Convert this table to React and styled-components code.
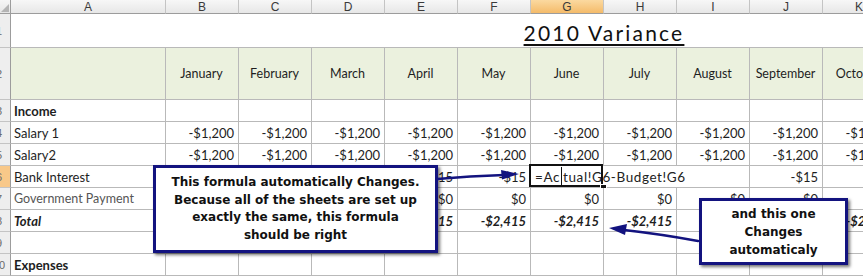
import React from 'react'
import styled, { createGlobalStyle } from 'styled-components'

const GlobalStyle = createGlobalStyle`
  html, body {
    margin: 0;
    padding: 0;
    background: #ffffff;
  }
`;

const GRID = '#b9b9b9';
const NAVY = '#13137f';
const HAND = '"Lato", "DejaVu Sans", sans-serif';

const Page = styled.div`
  position: relative;
  width: 863px;
  height: 279px;
  overflow: hidden;
  background: #ffffff;
`;

const Sheet = styled.div`
  display: grid;
  grid-template-columns: 11px 155px repeat(10, 73px);
  grid-template-rows: 14px 34px 52px repeat(9, 22px);
  width: 896px;
  font-family: ${HAND};
  color: #222;
`;

const Corner = styled.div`
  position: relative;
  background: linear-gradient(#f6f6f6, #e6e6e6);
  border-right: 1px solid #9c9c9c;
  border-bottom: 1px solid #9c9c9c;
  box-sizing: border-box;
  overflow: hidden;

  &::after {
    content: '';
    position: absolute;
    right: 1px;
    bottom: 1px;
    border-left: 8px solid transparent;
    border-bottom: 8px solid #b4b4b4;
  }
`;

const ColHead = styled.div`
  display: flex;
  align-items: center;
  justify-content: center;
  box-sizing: border-box;
  border-right: 1px solid #c4c4c4;
  border-bottom: 1px solid #9c9c9c;
  background: ${(p) => p.$active
    ? 'linear-gradient(#fbd9a0, #f4bb6a)'
    : 'linear-gradient(#f7f7f7, #e7e7e7)'};
  font-family: "Liberation Sans", Arial, sans-serif;
  font-size: 12px;
  color: #3a3a3a;
  line-height: 1;
`;

const RowHead = styled.div`
  display: flex;
  align-items: center;
  box-sizing: border-box;
  overflow: hidden;
  border-right: 1px solid #9c9c9c;
  border-bottom: 1px solid #c4c4c4;
  background: ${(p) => p.$active ? '#f8c889' : '#eeeeee'};
  font-family: "Liberation Sans", Arial, sans-serif;
  font-size: 11px;
  color: #6a6a6a;

  span {
    flex: none;
    width: 22px;
    margin-left: -12px;
    text-align: center;
  }
`;

const Cell = styled.div`
  display: flex;
  align-items: center;
  justify-content: ${(p) => p.$align === 'right' ? 'flex-end' : p.$align === 'center' ? 'center' : 'flex-start'};
  box-sizing: border-box;
  padding: 0 4px 0 3px;
  border-right: 1px solid ${GRID};
  border-bottom: 1px solid ${GRID};
  background: ${(p) => p.$fill || '#ffffff'};
  font-size: ${(p) => p.$size || 13}px;
  font-weight: ${(p) => p.$bold ? 700 : 400};
  font-style: ${(p) => p.$italic ? 'italic' : 'normal'};
  color: ${(p) => p.$muted ? '#555' : '#1e1e1e'};
  white-space: nowrap;
  overflow: ${(p) => p.$spill ? 'visible' : 'hidden'};
  position: relative;
  z-index: ${(p) => p.$spill ? 1 : 0};
`;

const TitleRow = styled.div`
  grid-column: 2 / -1;
  display: grid;
  grid-template-columns: 374px 438px 1fr;
  align-items: center;
  border-bottom: 1px solid ${GRID};
`;

const Title = styled.div`
  grid-column: 2;
  text-align: center;
  font-family: ${HAND};
  font-size: 21px;
  letter-spacing: 2.2px;
  text-decoration: underline;
  text-decoration-thickness: 1.5px;
  text-underline-offset: 3px;
  color: #111;
  padding-top: 4px;
`;

const FormulaCell = styled.div`
  grid-column: span 3;
  position: relative;
  display: flex;
  align-items: center;
  box-sizing: border-box;
  padding-left: 4px;
  border-right: 1px solid ${GRID};
  border-bottom: 1px solid ${GRID};
  font-size: 13.5px;
  letter-spacing: 0.6px;
  white-space: nowrap;
  background: #ffffff;

  &::before {
    content: '';
    position: absolute;
    left: -2px;
    top: -2px;
    width: 74px;
    height: 23px;
    border: 2px solid #111;
    box-sizing: border-box;
  }

  &::after {
    content: '';
    position: absolute;
    left: 69px;
    top: 18px;
    width: 5px;
    height: 5px;
    background: #111;
    border: 1px solid #fff;
  }
`;

const Caret = styled.span`
  display: inline-block;
  width: 1px;
  height: 20px;
  background: #111;
  margin: 0 1px;
  vertical-align: middle;
`;

const Callout = styled.div`
  position: absolute;
  left: ${(p) => p.$x}px;
  top: ${(p) => p.$y}px;
  width: ${(p) => p.$w}px;
  height: ${(p) => p.$h}px;
  box-sizing: border-box;
  padding-top: ${(p) => p.$pad}px;
  border: 3px solid ${NAVY};
  background: #ffffff;
  box-shadow: 2px 2px 3px rgba(0, 0, 0, 0.55);
  text-align: center;
  font-family: "DejaVu Sans", "Liberation Sans", sans-serif;
  font-weight: 700;
  font-size: 12px;
  line-height: ${(p) => p.$lh}px;
  color: #111;
  z-index: 3;
`;

const Arrows = styled.svg`
  position: absolute;
  left: 0;
  top: 0;
  z-index: 4;
  pointer-events: none;
`;

const months = ['January', 'February', 'March', 'April', 'May', 'June', 'July', 'August', 'September', 'October'];
const letters = ['B', 'C', 'D', 'E', 'F', 'G', 'H', 'I', 'J', 'K'];

// cells listed in `blank` sit fully under a note, so they stay empty
const fill = (v, blank = []) => letters.map((l) => (blank.includes(l) ? '' : v));

const rows = [
  { n: 3, label: 'Income', bold: true, values: fill('') },
  { n: 4, label: 'Salary 1', values: fill('-$1,200') },
  { n: 5, label: 'Salary2', values: fill('-$1,200') },
  { n: 6, label: 'Bank Interest', values: fill('-$15', ['B', 'C', 'D']), formula: true },
  { n: 7, label: 'Government Payment', muted: true, values: fill('$0', ['B', 'C', 'D']) },
  { n: 8, label: 'Total', bold: true, italic: true, values: fill('-$2,415', ['B', 'C', 'D', 'J']) },
  { n: 9, label: '', values: fill('') },
  { n: 10, label: 'Expenses', bold: true, values: fill('') },
];

const DataRow = ({ row }) => {
  const cells = [];
  row.values.forEach((v, i) => {
    if (row.formula && i === 5) {
      cells.push(
        <FormulaCell key={i}>
          =Ac<Caret />tual!G6-Budget!G6
        </FormulaCell>
      );
      return;
    }
    if (row.formula && (i === 6 || i === 7)) return;
    cells.push(
      <Cell key={i} $align="right" $bold={row.bold && row.italic} $italic={row.italic}>
        {v}
      </Cell>
    );
  });

  return (
    <>
      <RowHead $active={row.n === 6}><span>{row.n}</span></RowHead>
      <Cell
        $bold={row.bold}
        $italic={row.italic}
        $muted={row.muted}
        $size={row.muted ? 12.5 : 13}
        $spill={row.muted}
      >
        {row.label}
      </Cell>
      {cells}
    </>
  );
};

const App = () => {
  return (
    <Page>
      <GlobalStyle />
      <Sheet>
        <Corner />
        <ColHead>A</ColHead>
        {letters.map((l) => (
          <ColHead key={l} $active={l === 'G'}>{l}</ColHead>
        ))}

        <RowHead><span>1</span></RowHead>
        <TitleRow>
          <Title>2010 Variance</Title>
        </TitleRow>

        <RowHead><span>2</span></RowHead>
        <Cell $fill="#ebf1de" />
        {months.map((m) => (
          <Cell key={m} $fill="#ebf1de" $align="center" $size={12.5}>{m}</Cell>
        ))}

        {rows.map((r) => (
          <DataRow key={r.n} row={r} />
        ))}
      </Sheet>

      <Callout $x={153} $y={165} $w={285} $h={88} $pad={6} $lh={17.5}>
        This formula automatically Changes.<br />
        Because all of the sheets are set up<br />
        exactly the same, this formula<br />
        should be right
      </Callout>

      <Callout $x={699} $y={198} $w={149} $h={67} $pad={4} $lh={18}>
        and this one<br />
        Changes<br />
        automaticaly
      </Callout>

      <Arrows width="863" height="279" viewBox="0 0 863 279">
        <g stroke={NAVY} strokeWidth="2.5" fill="none" strokeLinecap="round">
          <path d="M437 179 Q470 176 504 175" />
          <path d="M698 241 Q660 234 624 230" />
        </g>
        <g fill={NAVY}>
          <polygon points="519,174 501,170 502,179.5" />
          <polygon points="609,228 627,224 625,235" />
        </g>
      </Arrows>
    </Page>
  );
};

export default App
